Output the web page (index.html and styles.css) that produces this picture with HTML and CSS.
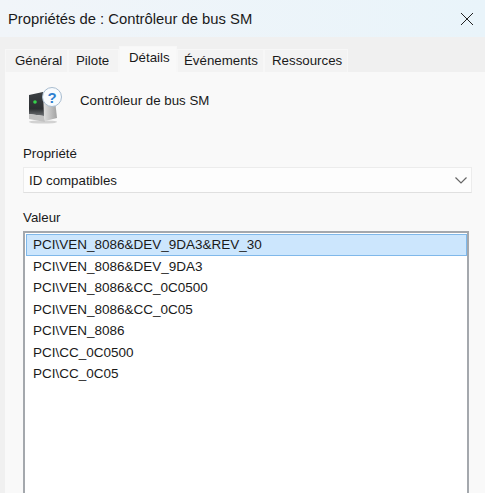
FILE: index.html
```html
<!DOCTYPE html>
<html lang="fr">
<head>
  <meta charset="UTF-8" />
  <meta name="viewport" content="width=device-width, initial-scale=1.0" />
  <title>Propriétés de : Contrôleur de bus SM</title>
  <link rel="stylesheet" href="styles.css">
</head>
<body>
  <div class="titlebar">
    <span class="title">Propriétés de : Contrôleur de bus SM</span>
    <svg class="close" width="14" height="14" viewBox="0 0 14 14">
      <path d="M1 1 L13 13 M13 1 L1 13" stroke="#222" stroke-width="1" fill="none" />
    </svg>
  </div>

  <div class="tabs">
    <div class="tab">Général</div>
    <div class="tab">Pilote</div>
    <div class="tab active">Détails</div>
    <div class="tab">Événements</div>
    <div class="tab">Ressources</div>
  </div>

  <div class="panel">
    <div class="device">
      <svg class="device-icon" width="36" height="38" viewBox="0 0 36 38">
        <defs>
          <linearGradient id="side" x1="0" y1="0" x2="1" y2="0">
            <stop offset="0" stop-color="#f0f0f0" />
            <stop offset="1" stop-color="#a2a2a2" />
          </linearGradient>
          <linearGradient id="front" x1="0" y1="0" x2="0" y2="1">
            <stop offset="0" stop-color="#3c4044" />
            <stop offset="0.7" stop-color="#2b2e31" />
            <stop offset="1" stop-color="#6f7275" />
          </linearGradient>
        </defs>
        <ellipse cx="15" cy="35" rx="14" ry="1.6" fill="#d2d2d2" />
        <path d="M12 5 L26 4 L29 31 L17 34 Z" fill="url(#side)" />
        <path d="M1 8 L15 5 L16 29 L1 27 Z" fill="url(#front)" />
        <path d="M1 27 L16 29 L17 35 L1 32 Z" fill="#c2c2c2" />
        <circle cx="7" cy="15" r="1.8" fill="#35d24a" />
        <circle cx="24" cy="10" r="9.5" fill="#f8fbfe" stroke="#a8bccf" />
        <text x="24" y="15.500" class="help-mark">?</text>
      </svg>
      <span class="device-name">Contrôleur de bus SM</span>
    </div>

    <label class="field-label">Propriété</label>
    <div class="combo">
      <span>ID compatibles</span>
      <svg width="12" height="7" viewBox="0 0 12 7">
        <path d="M0.500 0.500 L6 6 L11.500 0.500" stroke="#666" stroke-width="1.2" fill="none" />
      </svg>
    </div>

    <label class="field-label value-label">Valeur</label>
    <ul class="values">
      <li class="selected">PCI\VEN_8086&amp;DEV_9DA3&amp;REV_30</li>
      <li>PCI\VEN_8086&amp;DEV_9DA3</li>
      <li>PCI\VEN_8086&amp;CC_0C0500</li>
      <li>PCI\VEN_8086&amp;CC_0C05</li>
      <li>PCI\VEN_8086</li>
      <li>PCI\CC_0C0500</li>
      <li>PCI\CC_0C05</li>
    </ul>
  </div>
</body>
</html>
```

FILE: styles.css
```css
html, body {
  height: 100%;
}

body {
  margin: 0;
  background: #f0f0f0;
  color: #1a1a1a;
  font-family: 'Liberation Sans', Arial, sans-serif;
  font-size: 13.3px;
  display: flex;
  flex-direction: column;
  overflow: hidden;
}

.titlebar {
  height: 37px;
  flex: none;
  display: flex;
  align-items: center;
  justify-content: space-between;
  padding: 0 11px 0 8px;
  background: linear-gradient(90deg, #f1f5f9, #e9f4fa);
}

.title {
  font-size: 14.8px;
}

.tabs {
  height: 35px;
  flex: none;
  box-sizing: border-box;
  display: grid;
  grid-template-columns: 63px 51px 58px 87px 84px;
  align-items: end;
  margin-left: 5px;
}

.tab {
  height: 23px;
  box-sizing: border-box;
  padding: 3px 0 0 7px;
  background: #f3f3f3;
  border: 1px solid #f7f7f7;
  border-bottom: none;
  white-space: nowrap;
}

.tab:first-child {
  padding-left: 9px;
}

.tab.active {
  height: 26px;
  padding: 3px 0 0 9px;
  background: #f9f9f9;
}

.tab.active + .tab {
  padding-left: 6px;
}

.panel {
  flex: 1;
  min-height: 0;
  display: flex;
  flex-direction: column;
  margin-left: 5px;
  padding: 0 13px 0 18px;
  background: #f9f9f9;
}

.device {
  height: 60px;
  flex: none;
  display: flex;
  align-items: center;
  gap: 16px;
  padding: 0 0 4px 5px;
  box-sizing: border-box;
}

.device-icon {
  flex: none;
  margin-top: 12px;
}

.help-mark {
  font-size: 15px;
  font-weight: bold;
  text-anchor: middle;
  fill: #2f7fd0;
}

.field-label {
  display: block;
  flex: none;
  height: 18px;
  margin-top: 13px;
  line-height: 18px;
}

.combo {
  height: 26px;
  flex: none;
  margin-top: 4px;
  box-sizing: border-box;
  display: flex;
  align-items: center;
  justify-content: space-between;
  padding: 0 4px 0 5px;
  background: #fdfdfd;
  border: 1px solid #ececec;
  border-bottom-color: #e0e0e0;
}

.value-label {
  margin-top: 15px;
  padding-top: 1px;
}

.values {
  list-style: none;
  flex: 1;
  min-height: 0;
  margin: 4px 3px 0 0;
  padding: 1px 0 0 1px;
  font-size: 13.5px;
  background: #fff;
  border: 1px solid #a4a8ad;
  border-width: 2px 2px 0 2px;
}

.values li {
  height: 21.5px;
  line-height: 21.5px;
  box-sizing: border-box;
  padding-left: 7px;
}

.values li.selected {
  background: #cce6fd;
  border: 1px solid #7fb8ea;
  padding-left: 6px;
  line-height: 20px;
}
```
